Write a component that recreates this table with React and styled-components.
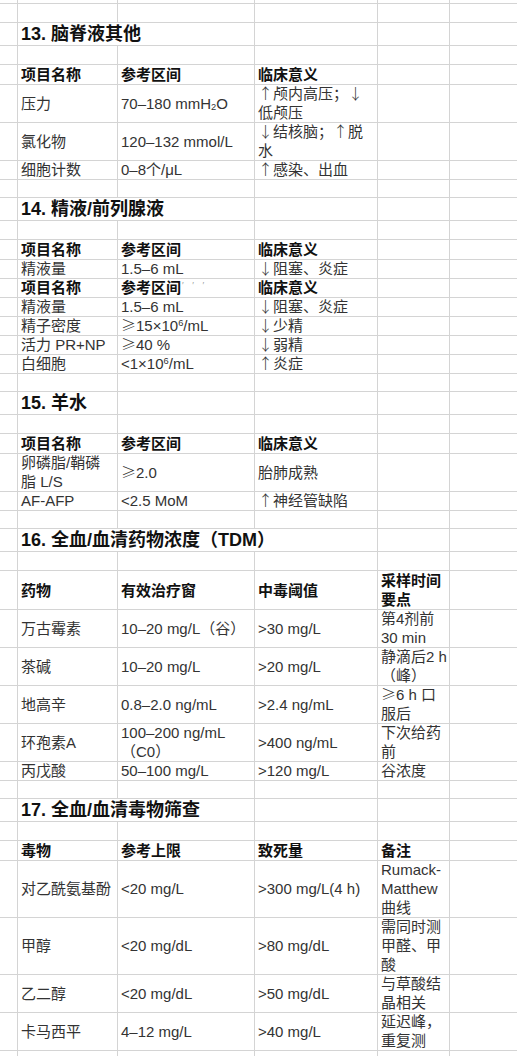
import React from 'react';
import styled, { createGlobalStyle } from 'styled-components';

const Global = createGlobalStyle`
  html, body { margin: 0; padding: 0; background: #fff; overflow: hidden; }
  body { font-family: "Liberation Sans", "Noto Sans CJK SC", sans-serif; }
`;

const Sheet = styled.div`
  width: 517px;
  overflow: hidden;
  background: #fff;
`;

const Row = styled.div`
  display: grid;
  grid-template-columns: 18px 100px 137px 123px 72px 100px;
  height: ${(p) => p.$h}px;
`;

const Cell = styled.div`
  box-sizing: border-box;
  min-width: 0;
  border-right: 1px solid #d4d4d4;
  border-bottom: 1px solid #d4d4d4;
  padding: 0 2px 0 3px;
  display: flex;
  flex-direction: column;
  justify-content: center;
  font-size: 15px;
  line-height: 19px;
  color: ${(p) => (p.$head ? '#111' : '#333')};
  font-weight: ${(p) => (p.$head ? 700 : 400)};
  white-space: nowrap;
`;

const TitleCell = styled(Cell)`
  grid-column: span ${(p) => p.$span};
  font-size: 18px;
  font-weight: 700;
  color: #111;
  padding-top: 1px;
`;

const Line = styled.span`
  display: block;
  height: 19px;
  line-height: 19px;
  white-space: nowrap;
`;

const Sym = styled.span`
  font-family: "Noto Sans CJK SC", sans-serif;
  font-weight: 300;
  line-height: 0;
`;

const Sub = styled.span`
  font-size: 0.62em;
  vertical-align: -0.15em;
  line-height: 0;
`;

const Sup = styled.span`
  font-size: 0.62em;
  vertical-align: 0.55em;
  line-height: 0;
`;

const Ghost = styled.span`
  color: #999;
  font-size: 9px;
  font-weight: 400;
  vertical-align: 0.6em;
  letter-spacing: 3px;
  margin-left: 1px;
  line-height: 0;
`;

const rows = [
  { h: 4 },
  { h: 19 },
  { h: 23, title: '13. 脑脊液其他', span: 2 },
  { h: 19 },
  { h: 19, head: true, cells: ['项目名称', '参考区间', '临床意义'] },
  { h: 38, cells: ['压力', <>70–180 mmH<Sub>2</Sub>O</>, ['↑颅内高压；↓', '低颅压']] },
  { h: 38, cells: ['氯化物', '120–132 mmol/L', ['↓结核脑；↑脱', '水']] },
  { h: 19, cells: ['细胞计数', '0–8个/μL', '↑感染、出血'] },
  { h: 19 },
  { h: 23, title: '14. 精液/前列腺液', span: 2 },
  { h: 19 },
  { h: 19, head: true, cells: ['项目名称', '参考区间', '临床意义'] },
  { h: 19, cells: ['精液量', '1.5–6 mL', '↓阻塞、炎症'] },
  { h: 19, head: true, cells: ['项目名称', <>参考区间<Ghost>′ ′ ′</Ghost></>, '临床意义'] },
  { h: 19, cells: ['精液量', '1.5–6 mL', '↓阻塞、炎症'] },
  { h: 19, cells: ['精子密度', <><Sym>≥</Sym>15×10<Sup>6</Sup>/mL</>, '↓少精'] },
  { h: 19, cells: ['活力 PR+NP', '≥40 %', '↓弱精'] },
  { h: 19, cells: ['白细胞', <>&lt;1×10<Sup>6</Sup>/mL</>, '↑炎症'] },
  { h: 19 },
  { h: 23, title: '15. 羊水', span: 1 },
  { h: 19 },
  { h: 19, head: true, cells: ['项目名称', '参考区间', '临床意义'] },
  { h: 38, cells: [['卵磷脂/鞘磷', '脂 L/S'], '≥2.0', '胎肺成熟'] },
  { h: 19, cells: ['AF-AFP', '<2.5 MoM', '↑神经管缺陷'] },
  { h: 19 },
  { h: 23, title: '16. 全血/血清药物浓度（TDM）', span: 3 },
  { h: 19 },
  { h: 38, head: true, cells: ['药物', '有效治疗窗', '中毒阈值', ['采样时间', '要点']] },
  { h: 38, cells: ['万古霉素', '10–20 mg/L（谷）', '>30 mg/L', ['第4剂前', '30 min']] },
  { h: 38, cells: ['茶碱', '10–20 mg/L', '>20 mg/L', ['静滴后2 h', '（峰）']] },
  { h: 38, cells: ['地高辛', '0.8–2.0 ng/mL', '>2.4 ng/mL', ['≥6 h 口', '服后']] },
  { h: 38, cells: ['环孢素A', ['100–200 ng/mL', '（C0）'], '>400 ng/mL', ['下次给药', '前']] },
  { h: 19, cells: ['丙戊酸', '50–100 mg/L', '>120 mg/L', '谷浓度'] },
  { h: 19 },
  { h: 23, title: '17. 全血/血清毒物筛查', span: 2 },
  { h: 19 },
  { h: 19, head: true, cells: ['毒物', '参考上限', '致死量', '备注'] },
  { h: 57, cells: ['对乙酰氨基酚', '<20 mg/L', '>300 mg/L(4 h)', ['Rumack-', 'Matthew', '曲线']] },
  { h: 57, cells: ['甲醇', '<20 mg/dL', '>80 mg/dL', ['需同时测', '甲醛、甲', '酸']] },
  { h: 38, cells: ['乙二醇', '<20 mg/dL', '>50 mg/dL', ['与草酸结', '晶相关']] },
  { h: 38, cells: ['卡马西平', '4–12 mg/L', '>40 mg/L', ['延迟峰，', '重复测']] },
  { h: 19 },
];

function withSymbols(text) {
  if (typeof text !== 'string') return text;
  return text.split(/([↑↓≥])/).map((part, i) =>
    /^[↑↓≥]$/.test(part) ? <Sym key={i}>{part}</Sym> : part
  );
}

function Content({ value }) {
  if (value === undefined || value === null) return null;
  const lines = Array.isArray(value) ? value : [value];
  return lines.map((l, i) => <Line key={i}>{withSymbols(l)}</Line>);
}

export default function App() {
  return (
    <>
      <Global />
      <Sheet>
        {rows.map((r, i) => {
          if (r.title) {
            const rest = 4 - r.span;
            return (
              <Row key={i} $h={r.h}>
                <Cell />
                <TitleCell $span={r.span}>
                  <Line>{r.title}</Line>
                </TitleCell>
                {Array.from({ length: rest }).map((_, j) => (
                  <Cell key={j} />
                ))}
                <Cell />
              </Row>
            );
          }
          const cells = r.cells || [];
          return (
            <Row key={i} $h={r.h}>
              <Cell />
              {[0, 1, 2, 3].map((j) => (
                <Cell key={j} $head={r.head}>
                  <Content value={cells[j]} />
                </Cell>
              ))}
              <Cell />
            </Row>
          );
        })}
      </Sheet>
    </>
  );
}
